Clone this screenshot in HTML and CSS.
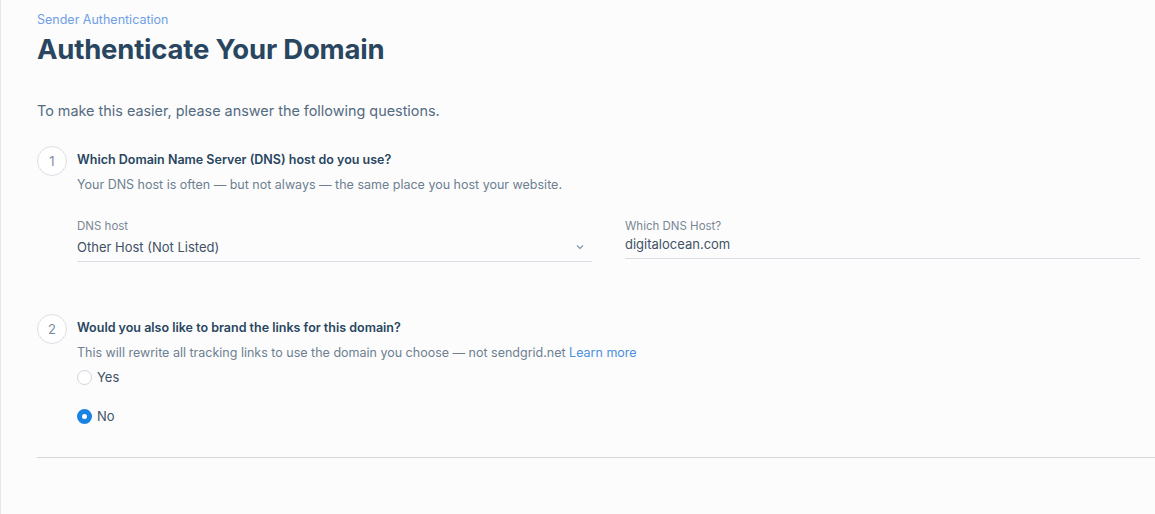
FILE: index.html
```html
<!DOCTYPE html>
<html>
<head>
<meta charset="utf-8">
<link rel="stylesheet" href="styles.css">
</head>
<body>
<div class="page">
  <div class="crumb">Sender Authentication</div>
  <h1 class="title">Authenticate Your Domain</h1>
  <p class="intro">To make this easier, please answer the following questions.</p>

  <section class="step">
    <div class="num">1</div>
    <div class="step-body">
      <div class="q">Which Domain Name Server (DNS) host do you use?</div>
      <div class="hint">Your DNS host is often — but not always — the same place you host your website.</div>
      <div class="fields">
        <div class="field">
          <div class="label">DNS host</div>
          <div class="select">
            <span>Other Host (Not Listed)</span>
            <svg class="chev" width="8" height="6" viewBox="0 0 8 6"><path d="M1 1.5 L4 4.5 L7 1.5" fill="none" stroke="#7c93ad" stroke-width="1.2"/></svg>
          </div>
        </div>
        <div class="field field-text">
          <div class="label">Which DNS Host?</div>
          <div class="input">digitalocean.com</div>
        </div>
      </div>
    </div>
  </section>

  <section class="step step2">
    <div class="num">2</div>
    <div class="step-body">
      <div class="q">Would you also like to brand the links for this domain?</div>
      <div class="hint">This will rewrite all tracking links to use the domain you choose — not sendgrid.net <a class="link">Learn more</a></div>
      <div class="radios">
        <label class="radio"><span class="dot"></span>Yes</label>
        <label class="radio checked"><span class="dot"></span>No</label>
      </div>
    </div>
  </section>

  <hr class="divider">
</div>
</body>
</html>
```

FILE: styles.css
```css
html, body {
  margin: 0;
  padding: 0;
  background: #fcfcfc;
}
body {
  font-family: "Inter", "Open Sans", sans-serif;
  color: #294661;
  height: 514px;
  overflow: hidden;
  border-left: 1px solid #e4e7eb;
  box-sizing: border-box;
}
.page {
  padding: 12px 0 0 36px;
}
.crumb {
  font-size: 12.5px;
  color: #6fa0e6;
  line-height: 16px;
}
.title {
  margin: 4px 0 0;
  font-size: 27.5px;
  font-weight: 700;
  line-height: 34px;
  letter-spacing: -0.2px;
  color: #294661;
}
.intro {
  margin: 35px 0 0;
  font-size: 14.4px;
  line-height: 20px;
  color: #546b81;
}
.step {
  display: flex;
  gap: 10px;
  margin-top: 25px;
  padding-right: 15px;
}
.num {
  flex: none;
  width: 30px;
  height: 30px;
  box-sizing: border-box;
  border: 1px solid #d9dfe5;
  border-radius: 50%;
  display: flex;
  align-items: center;
  justify-content: center;
  font-size: 13px;
  color: #7a8ea3;
  background: #fff;
}
.step-body {
  flex: 1;
  padding-top: 5px;
}
.q {
  font-size: 12.5px;
  font-weight: 600;
  line-height: 18px;
  color: #294661;
}
.hint {
  font-size: 12.5px;
  line-height: 18px;
  color: #6d7f91;
  margin-top: 7px;
}
.link {
  color: #4a8fe0;
}
.fields {
  display: flex;
  gap: 33px;
  margin-top: 24px;
}
.field {
  flex: 1;
}
.label {
  font-size: 11.5px;
  line-height: 16px;
  color: #7a8794;
}
.select {
  display: flex;
  justify-content: space-between;
  align-items: center;
  margin-top: 4px;
  padding-bottom: 5px;
  border-bottom: 1px solid #d8dde3;
  font-size: 13px;
  line-height: 18px;
  color: #3f5266;
}
.chev {
  margin-right: 8px;
}
.input {
  margin-top: 1px;
  padding-bottom: 5px;
  border-bottom: 1px solid #d8dde3;
  font-size: 13px;
  line-height: 18px;
  color: #3f5266;
}
.step2 {
  margin-top: 52px;
}
.radios {
  display: flex;
  flex-direction: column;
  gap: 21px;
  margin-top: 6px;
}
.radio {
  display: flex;
  align-items: center;
  gap: 5px;
  font-size: 13px;
  line-height: 18px;
  color: #3f5266;
}
.dot {
  width: 13px;
  height: 13px;
  border: 1px solid #cfd6de;
  border-radius: 50%;
  background: #fff;
  box-sizing: content-box;
}
.checked .dot {
  width: 5px;
  height: 5px;
  border: 5px solid #1a82e2;
  background: #fff;
}
.divider {
  margin: 32px 0 0;
  border: 0;
  border-top: 1px solid #d6d6d6;
}
```
